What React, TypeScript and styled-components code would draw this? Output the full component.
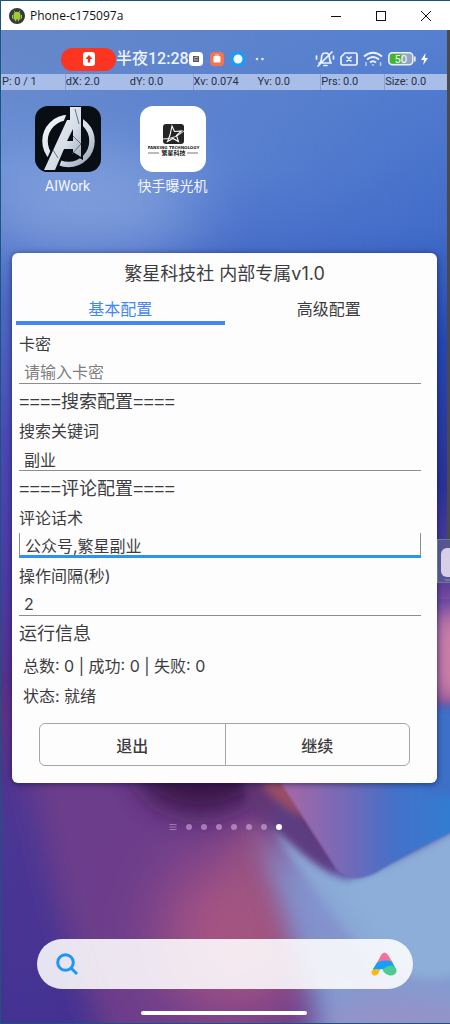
import React from 'react';
import styled, { createGlobalStyle } from 'styled-components';

const GlobalStyle = createGlobalStyle`
  *, *::before, *::after { box-sizing: border-box; }
  html, body { margin: 0; padding: 0; }
  body { font-family: Inter, "Noto Sans CJK SC", sans-serif; color: #3c3c40; }
  button, input { font: inherit; color: inherit; }
`;

const Window = styled.div`
  display: flex;
  flex-direction: column;
  min-height: 100vh;
  border: 1px solid #17577a;
  border-right: 0;
`;

const TitleBar = styled.header`
  display: flex;
  align-items: center;
  height: 29px;
  padding: 0 2px 0 8px;
  background: #fff;
  color: #111;
  font-family: "Open Sans", sans-serif;
  font-size: 12px;
`;

const WindowTitle = styled.h1`
  flex: 1;
  margin: 0 0 0 5px;
  font-size: 12px;
  font-weight: 400;
`;

const WindowButton = styled.button`
  display: flex;
  align-items: center;
  justify-content: center;
  width: 45px;
  height: 29px;
  padding: 0;
  border: 0;
  background: none;
`;

const Phone = styled.main`
  position: relative;
  isolation: isolate;
  display: flex;
  flex: 1;
  flex-direction: column;
  overflow: hidden;
`;

const Wallpaper = styled.svg`
  position: absolute;
  inset: 0;
  z-index: -1;
  width: 100%;
  height: 100%;
`;

const ScrollRail = styled.div`
  position: absolute;
  top: 0;
  right: 0;
  width: 3px;
  height: 531px;
  background: #4b4a4b;
`;

const StatusBar = styled.div`
  display: flex;
  align-items: center;
  height: 26px;
  margin-top: 16px;
  padding: 0 22px 0 60px;
  color: #eef3ff;
`;

const RecordPill = styled.div`
  display: flex;
  align-items: center;
  justify-content: center;
  width: 55px;
  height: 23px;
  border-radius: 12px;
  background: #fc3520;
`;

const Clock = styled.span`
  font: 500 16px/24px Roboto, "Noto Sans CJK SC", sans-serif;
  white-space: nowrap;
`;

const Notifications = styled.div`
  display: flex;
  align-items: center;
  gap: 7px;
  flex: 1;
`;

const SystemIcons = styled.div`
  display: flex;
  align-items: center;
  gap: 5px;
`;

const PointerBar = styled.div`
  display: grid;
  grid-template-columns: repeat(7, 1fr);
  height: 16px;
  margin: 2px 2px 0 0;
  background: #a8bee8;
  color: #27304a;
  font: 400 11px/16px Roboto, sans-serif;
`;

const PointerCell = styled.span<{ $divided?: boolean }>`
  padding-left: 1px;
  white-space: nowrap;
  box-shadow: ${(p) => (p.$divided ? 'inset 1px 0 #8c9fd6' : 'none')};
`;

const AppGrid = styled.nav`
  display: flex;
  gap: 20px;
  padding: 16px 24px 0;
`;

const AppLink = styled.a`
  display: flex;
  flex-direction: column;
  align-items: center;
  gap: 4px;
  width: 85px;
  color: #f2f6ff;
  font: 400 14px/20px Roboto, "Noto Sans CJK SC", sans-serif;
  text-decoration: none;
`;

const Dialog = styled.form`
  display: flex;
  flex-direction: column;
  margin: 57px 13px 0 11px;
  padding-bottom: 17px;
  border-radius: 6px;
  background: #fdfdfe;
  box-shadow: 0 1px 6px rgba(10, 15, 60, 0.6);
`;

const DialogTitle = styled.h2`
  margin: 0;
  font-size: 18px;
  font-weight: 400;
  line-height: 41px;
  text-align: center;
`;

const Tabs = styled.div`
  display: grid;
  grid-template-columns: 1fr 1fr;
  padding: 0 4px;
`;

const Tab = styled.button<{ $active?: boolean }>`
  height: 31px;
  padding: 4px 0 0;
  border: 0;
  border-bottom: 4px solid ${(p) => (p.$active ? '#4386f5' : 'transparent')};
  background: none;
  color: ${(p) => (p.$active ? '#4386f5' : '#3c3c40')};
  font-size: 16px;
  line-height: 23px;
`;

const Body = styled.div`
  display: flex;
  flex-direction: column;
  padding: 7px 16px 0 7px;
`;

const Field = styled.label`
  display: flex;
  flex-direction: column;
  font-size: 16px;
  line-height: 24px;

  & + & { margin-top: 6px; }
`;

const TextInput = styled.input<{ $focused?: boolean }>`
  width: 100%;
  height: 25px;
  margin-top: 3px;
  padding: 2px 5px 0;
  border: solid #8f8c8f;
  border-width: ${(p) => (p.$focused ? '0 1px 3px' : '0 0 1px')};
  border-bottom-color: ${(p) => (p.$focused ? '#2b93f5' : '#8f8c8f')};
  border-radius: 0;
  outline: 0;
  background: none;

  &::placeholder { color: #7e7e82; opacity: 1; }
`;

const SectionTitle = styled.h3`
  margin: 0;
  padding-top: 2px;
  font-family: "Liberation Sans", "Noto Sans CJK SC", sans-serif;
  font-size: 18px;
  font-weight: 400;
  line-height: 33px;
`;

const InfoLine = styled.p`
  margin: 0;
  padding-left: 4px;
  font-size: 16px;
  line-height: 30px;
`;

const Actions = styled.div`
  display: grid;
  grid-template-columns: 1fr 1fr;
  margin: 12px 27px 0;
  border: 1px solid #a9a3aa;
  border-radius: 6px;
`;

const ActionButton = styled.button`
  height: 41px;
  padding: 0;
  border: 0;
  background: none;
  font-size: 16px;
  font-weight: 500;

  & + & { border-left: 1px solid #a9a3aa; }
`;

const Pager = styled.div`
  display: flex;
  align-items: center;
  justify-content: center;
  gap: 9px;
  height: 10px;
  margin-top: 39px;
`;

const PagerDot = styled.i<{ $active?: boolean }>`
  width: 6px;
  height: 6px;
  border-radius: 50%;
  background: ${(p) => (p.$active ? '#fff' : 'rgba(225, 195, 235, 0.5)')};
`;

const PagerMenu = styled.svg`
  width: 8px;
  height: 8px;
`;

const SearchBox = styled.label`
  display: flex;
  align-items: center;
  height: 50px;
  margin: auto 37px 0 36px;
  padding: 0 16px 0 18px;
  border-radius: 25px;
  background: rgba(255, 255, 255, 0.87);
`;

const SearchInput = styled.input`
  flex: 1;
  min-width: 0;
  border: 0;
  outline: 0;
  background: none;
  font-size: 16px;
`;

const HomeIndicator = styled.div`
  align-self: center;
  width: 166px;
  height: 4px;
  margin: 22px 4px 8px 0;
  border-radius: 2px;
  background: #fff;
`;

const EdgeHandle = styled.div`
  position: absolute;
  top: 509px;
  right: 0;
  width: 13px;
  height: 44px;
  padding: 8px 0 6px 3px;
  border: 1px solid rgba(110, 160, 120, 0.6);
  border-right: 0;
  background: rgba(90, 95, 150, 0.75);
`;

const HandleGrip = styled.div`
  height: 29px;
  padding: 17px 0 0 4px;
  border-radius: 6px 0 0 6px;
  background: #d6cfe6;
`;

const blurs: Array<[string, number]> = [['b40', 32], ['b15', 14], ['b5', 4], ['b1', 1]];

const WallpaperArt = () => (
  <Wallpaper viewBox="0 30 450 994" preserveAspectRatio="none" aria-hidden="true">
    <defs>
      <linearGradient id="sky" x1="0" y1="0" x2="0" y2="1">
        <stop offset="0" stopColor="#6688c8" />
        <stop offset="0.14" stopColor="#6a8ed6" />
        <stop offset="0.24" stopColor="#5070c8" />
        <stop offset="0.42" stopColor="#4c48b4" />
        <stop offset="0.56" stopColor="#4c3aa4" />
        <stop offset="0.68" stopColor="#582e86" />
        <stop offset="0.8" stopColor="#4b3794" />
        <stop offset="1" stopColor="#443292" />
      </linearGradient>
      <linearGradient id="skyRight" x1="0" y1="0" x2="0" y2="1">
        <stop offset="0" stopColor="#5580d0" />
        <stop offset="0.35" stopColor="#416cc8" />
        <stop offset="0.55" stopColor="#2447b2" />
        <stop offset="0.8" stopColor="#293298" />
        <stop offset="1" stopColor="#64419c" />
      </linearGradient>
      <linearGradient id="fadeRight" x1="0" y1="0" x2="1" y2="0">
        <stop offset="0" stopColor="#fff" stopOpacity="0" />
        <stop offset="1" stopColor="#fff" />
      </linearGradient>
      <mask id="rightMask">
        <rect x="0" y="30" width="450" height="570" fill="url(#fadeRight)" />
      </mask>
      <linearGradient id="wedge" x1="290" y1="0" x2="450" y2="0" gradientUnits="userSpaceOnUse">
        <stop offset="0" stopColor="#a268a8" />
        <stop offset="0.35" stopColor="#746ab8" />
        <stop offset="0.65" stopColor="#4570c8" />
        <stop offset="1" stopColor="#327dd2" />
      </linearGradient>
      {blurs.map(([id, deviation]) => (
        <filter key={id} id={id} filterUnits="userSpaceOnUse" x="-100" y="-70" width="650" height="1200">
          <feGaussianBlur stdDeviation={deviation} />
        </filter>
      ))}
    </defs>
    <rect x="0" y="30" width="450" height="994" fill="url(#sky)" />
    <rect x="0" y="30" width="450" height="570" fill="url(#skyRight)" mask="url(#rightMask)" />
    <ellipse cx="90" cy="205" rx="110" ry="50" fill="#8faae0" opacity="0.7" filter="url(#b40)" />
    <path d="M10 700H320V1060H110L60 920Z" fill="#6c3c8b" filter="url(#b15)" />
    <ellipse cx="235" cy="935" rx="75" ry="80" fill="#a85583" filter="url(#b40)" />
    <ellipse cx="254" cy="900" rx="32" ry="80" fill="#a0567f" opacity="0.6" filter="url(#b15)" />
    <ellipse cx="200" cy="770" rx="65" ry="45" fill="#3a1448" filter="url(#b15)" />
    <path d="M238 760H300L340 865Q290 850 250 815Z" fill="#643874" opacity="0.8" filter="url(#b5)" />
    <path d="M262 835Q300 875 350 890Q395 875 490 830V1080H330Q300 940 262 835Z" fill="#859bd0" filter="url(#b15)" />
    <path d="M272 826Q310 868 346 881Q395 865 480 815V960Q440 1000 370 960Q310 900 272 826Z" fill="#8caed8" filter="url(#b5)" />
    <path d="M264 826Q280 880 310 960L390 1000Q330 900 264 826Z" fill="#828dcb" opacity="0.7" filter="url(#b15)" />
    <ellipse cx="400" cy="1040" rx="90" ry="40" fill="#a08dc4" opacity="0.6" filter="url(#b15)" />
    <path d="M278 780L338 875Q305 858 272 822Z" fill="#5c3c80" filter="url(#b5)" />
    <path d="M262 772H284L306 818Q285 812 264 790Z" fill="#b2565c" opacity="0.7" filter="url(#b5)" />
    <path d="M278 780H460V829Q410 853 375 874Q350 886 336 870Z" fill="url(#wedge)" filter="url(#b1)" />
    <rect x="430" y="610" width="60" height="95" fill="#d283a8" filter="url(#b15)" />
    <rect x="425" y="706" width="60" height="90" fill="#3e6fc8" filter="url(#b5)" />
  </Wallpaper>
);

const AndroidIcon = () => (
  <svg width="16" height="16" viewBox="0 0 16 16" aria-hidden="true">
    <circle cx="8" cy="8" r="8" fill="#35393a" />
    <path d="M5 2.500l1.200 2M11 2.500l-1.200 2" stroke="#a1c93a" strokeWidth="0.8" />
    <path d="M4.500 7a3.500 3.300 0 0 1 7 0v4.400h-1.400v1.800H8.800v-1.800H7.200v1.800H5.900v-1.800H4.500zM3 7h1v3.600H3zM12 7h1v3.600h-1z" fill="#a1c93a" />
  </svg>
);

const AvengersIcon = () => (
  <svg width="66" height="66" viewBox="0 0 66 66" aria-hidden="true">
    <defs>
      <linearGradient id="steel" x1="0" y1="0" x2="1" y2="1">
        <stop offset="0" stopColor="#f4f7fb" />
        <stop offset="0.6" stopColor="#d5dde7" />
        <stop offset="1" stopColor="#94a1b2" />
      </linearGradient>
      <clipPath id="iconClip"><rect width="66" height="66" rx="13" /></clipPath>
    </defs>
    <g clipPath="url(#iconClip)">
      <rect width="66" height="66" fill="#090d14" />
      <circle cx="33.5" cy="35" r="23.5" fill="none" stroke="url(#steel)" strokeWidth="5.5" />
      <path d="M33 4H48V54L37 48V45H30L22 66H6L30 12z" fill="#090d14" />
      <path d="M35 1H46V51L38 46V43H29L20 64H9L32 14H35z" fill="url(#steel)" />
      <path d="M38 23V35H32z" fill="#090d14" />
      <path d="M38 30L46 38 37 48M18 44l5 8M40 3l4 15" stroke="#4d5866" strokeWidth="0.8" fill="none" />
    </g>
  </svg>
);

const FanxingIcon = () => (
  <svg width="66" height="66" viewBox="0 0 66 66" aria-hidden="true">
    <rect width="66" height="66" rx="13" fill="#fff" />
    <rect x="23" y="18" width="21" height="20" rx="3" fill="#252525" />
    <path d="M32 20l2.500 5.500 7-.5-5 4.500 2 6-5.500-3-5.500 3 2.500-6.500z" fill="none" stroke="#fff" strokeWidth="1.1" />
    <path d="M23 33q12 0 21-8" stroke="#fff" strokeWidth="0.9" fill="none" />
    <text x="33.5" y="43" textAnchor="middle" fontFamily="DejaVu Sans, sans-serif" fontWeight="700" fontSize="4" fill="#222">FANXING TECHNOLOGY</text>
    <path d="M8 47H19M47 47H58" stroke="#555" strokeWidth="0.8" />
    <text x="33.5" y="49" textAnchor="middle" fontFamily="Noto Sans CJK SC, sans-serif" fontWeight="700" fontSize="6" fill="#222">繁星科技</text>
  </svg>
);

const SystemStatus = () => (
  <SystemIcons>
    <svg width="20" height="18" viewBox="0 0 20 18" fill="none" stroke="#edf2ff" strokeWidth="1.7" strokeLinecap="round" aria-label="静音">
      <path d="M4 13h12M5 13q1.500-2 1.500-5Q6.500 3 10.500 3T14.500 8q0 3 1.500 5M9 15.500h3M17 2L3 16M1.500 6v3M18.500 6v3" />
    </svg>
    <svg width="18" height="14" viewBox="0 0 18 14" fill="none" stroke="#edf2ff" strokeWidth="1.7" aria-label="无SIM卡">
      <path d="M5 1H15.500Q17 1 17 2.500V11.500Q17 13 15.500 13H2.500Q1 13 1 11.500V5zM6.500 4.500l5 5M11.500 4.500l-5 5" />
    </svg>
    <svg width="20" height="16" viewBox="0 0 20 16" fill="none" stroke="#edf2ff" strokeWidth="2" aria-label="无线网络">
      <path d="M1 5.500Q10-2 19 5.500M4 8.500Q10 3.500 16 8.500M7 11.500Q10 9 13 11.500" />
      <path d="M8.500 13.500h3L10 15z" fill="#edf2ff" stroke="none" />
      <path d="M3 11v4M17.500 11v4" stroke="#a9d0ff" strokeWidth="1.500" />
    </svg>
    <svg width="28" height="14" viewBox="0 0 28 14" aria-label="电量">
      <rect x="0.800" y="0.800" width="24" height="12" rx="3.500" fill="#8fa7c4" stroke="#e8efff" strokeWidth="1.500" />
      <path d="M4 2H13V11.500H4Q2 11.500 2 9.500V4Q2 2 4 2z" fill="#45b528" />
      <path d="M26.800 4.500v5" stroke="#e8efff" strokeWidth="1.600" />
      <text x="13" y="10.500" textAnchor="middle" fontFamily="Inter, sans-serif" fontWeight="500" fontSize="10" fill="#eef5e8">50</text>
    </svg>
    <svg width="7" height="12" viewBox="0 0 7 12" aria-hidden="true"><path d="M4.500 0L0 7h3L2.200 12 7 5H4z" fill="#fff" /></svg>
  </SystemIcons>
);

const pointerCells: Array<[string, boolean]> = [
  ['P: 0 / 1', false],
  ['dX: 2.0', true],
  ['dY: 0.0', false],
  ['Xv: 0.074', true],
  ['Yv: 0.0', false],
  ['Prs: 0.0', true],
  ['Size: 0.0', true],
];

export default function App() {
  return (
    <>
      <GlobalStyle />
      <Window>
        <TitleBar>
          <AndroidIcon />
          <WindowTitle>Phone-c175097a</WindowTitle>
          <WindowButton aria-label="最小化">
            <svg width="10" height="10" viewBox="0 0 10 10"><path d="M0 5.500H10" stroke="#111" /></svg>
          </WindowButton>
          <WindowButton aria-label="最大化">
            <svg width="10" height="10" viewBox="0 0 10 10"><rect x="0.500" y="0.500" width="9" height="9" fill="none" stroke="#111" /></svg>
          </WindowButton>
          <WindowButton aria-label="关闭">
            <svg width="10" height="10" viewBox="0 0 10 10"><path d="M0 0L10 10M10 0L0 10" stroke="#111" /></svg>
          </WindowButton>
        </TitleBar>

        <Phone>
          <WallpaperArt />
          <ScrollRail />
          <StatusBar>
            <RecordPill>
              <svg width="12" height="14" viewBox="0 0 12 14" aria-label="录屏">
                <rect width="12" height="14" rx="3" fill="#fff" />
                <path d="M6 3L9.500 7H7.200V10.500H4.800V7H2.500z" fill="#e83220" />
              </svg>
            </RecordPill>
            <Clock>半夜12:28</Clock>
            <Notifications>
              <svg width="14" height="14" viewBox="0 0 14 14" aria-hidden="true">
                <rect width="14" height="14" rx="4" fill="#fff" />
                <path d="M4 4h6v6H4z" fill="#55585c" /><path d="M5 6l4-1M5 8h4" stroke="#ddd" strokeWidth="0.800" />
              </svg>
              <svg width="14" height="14" viewBox="0 0 14 14" aria-hidden="true">
                <rect width="14" height="14" rx="4" fill="#f3744e" />
                <rect x="3.500" y="4" width="7" height="6.500" rx="1" fill="#fff" /><path d="M5 3h4" stroke="#ffd8c8" />
              </svg>
              <svg width="14" height="14" viewBox="0 0 14 14" aria-hidden="true">
                <rect width="14" height="14" rx="4" fill="#159df8" />
                <circle cx="7" cy="7" r="4.500" fill="#f4fbff" />
              </svg>
              <svg width="12" height="4" viewBox="0 0 12 4" aria-hidden="true">
                <circle cx="5" cy="2" r="1.300" fill="#dce6ff" /><circle cx="10.500" cy="2" r="1.300" fill="#dce6ff" />
              </svg>
            </Notifications>
            <SystemStatus />
          </StatusBar>

          <PointerBar>
            {pointerCells.map(([text, divided]) => (
              <PointerCell key={text} $divided={divided}>{text}</PointerCell>
            ))}
          </PointerBar>

          <AppGrid>
            <AppLink href="#aiwork"><AvengersIcon />AIWork</AppLink>
            <AppLink href="#kuaishou"><FanxingIcon />快手曝光机</AppLink>
          </AppGrid>

          <Dialog onSubmit={(e) => e.preventDefault()}>
            <DialogTitle>繁星科技社 内部专属v1.0</DialogTitle>
            <Tabs role="tablist">
              <Tab type="button" role="tab" aria-selected="true" $active>基本配置</Tab>
              <Tab type="button" role="tab" aria-selected="false">高级配置</Tab>
            </Tabs>
            <Body>
              <Field>卡密<TextInput placeholder="请输入卡密" /></Field>
              <SectionTitle>====搜索配置====</SectionTitle>
              <Field>搜索关键词<TextInput defaultValue="副业" /></Field>
              <SectionTitle>====评论配置====</SectionTitle>
              <Field>评论话术<TextInput defaultValue="公众号,繁星副业" $focused /></Field>
              <Field>操作间隔(秒)<TextInput defaultValue="2" inputMode="numeric" /></Field>
              <SectionTitle>运行信息</SectionTitle>
              <InfoLine>总数: 0 | 成功: 0 | 失败: 0</InfoLine>
              <InfoLine>状态: 就绪</InfoLine>
            </Body>
            <Actions>
              <ActionButton type="button">退出</ActionButton>
              <ActionButton type="submit">继续</ActionButton>
            </Actions>
          </Dialog>

          <Pager>
            <PagerMenu viewBox="0 0 8 8" aria-hidden="true">
              <path d="M0.500 1.500h7M0.500 4h7M0.500 6.500h7" stroke="#c9a3d0" strokeOpacity="0.600" />
            </PagerMenu>
            {[0, 1, 2, 3, 4, 5, 6].map((n) => <PagerDot key={n} $active={n === 6} />)}
          </Pager>

          <SearchBox>
            <svg width="24" height="24" viewBox="0 0 24 24" fill="none" stroke="#1e96f8" strokeWidth="3" aria-hidden="true">
              <circle cx="10.500" cy="10.500" r="7.800" /><path d="M16 16l6 6" />
            </svg>
            <SearchInput type="search" aria-label="搜索" />
            <svg width="26" height="24" viewBox="0 0 26 24" aria-hidden="true">
              <path d="M6 11L10 3Q13.500-2 17 3L22 11Q14 8 6 11z" fill="#f7709b" />
              <path d="M2 17L6 10.500Q14 7 21 10L24 15Q17 13 13 18Q11 16 8 18L3 20z" fill="#12a0fa" />
              <path d="M1 18.500Q4 16 9 17.500L7 22Q5 24 2.500 23.500Q-0.500 22 1 18.500z" fill="#fdb813" />
              <path d="M11.500 18Q15 13.500 21 13.500Q26 15 25.500 19.500Q24 24 19 23.500Q14 22.500 11.500 18z" fill="#4bcb94" />
            </svg>
          </SearchBox>
          <HomeIndicator />
          <EdgeHandle>
            <HandleGrip>
              <svg width="5" height="2" viewBox="0 0 5 2" aria-hidden="true"><path d="M0 1h5" stroke="#9a8fb5" /></svg>
            </HandleGrip>
          </EdgeHandle>
        </Phone>
      </Window>
    </>
  );
}
